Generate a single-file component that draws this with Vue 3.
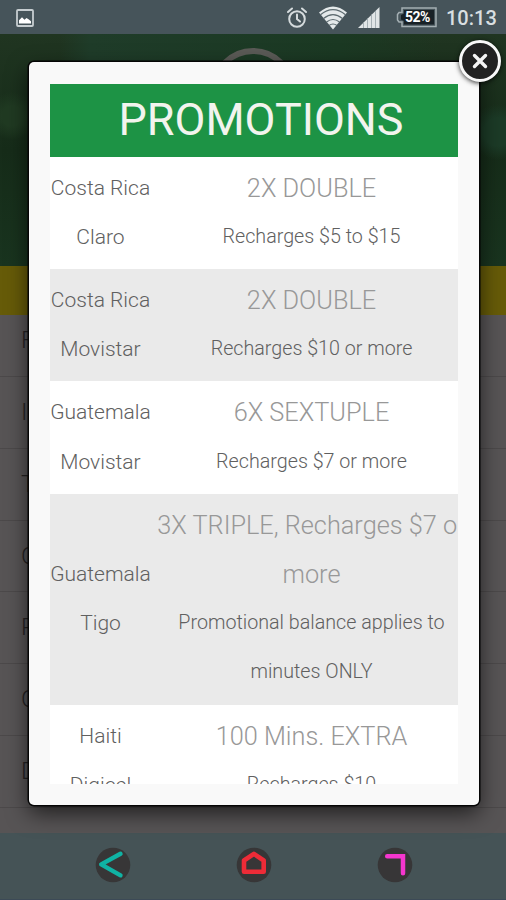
<template>
  <div class="phone">
    <header class="status-bar">
      <svg class="icon-picture" width="18" height="18" viewBox="0 0 18 18">
        <rect x="1" y="1" width="16" height="16" rx="1" fill="none" stroke="#c6cdd0" stroke-width="1.8" />
        <path d="M3 14.500v-3.200l3-3 2.500 2.500 2-1.800 2 1.300 2.500 2v2.200z" fill="#fff" />
      </svg>
      <div class="status-icons">
        <svg class="icon-alarm" width="20" height="22" viewBox="0 0 20 22" fill="none" stroke="#d5dbdd" stroke-width="2">
          <circle cx="10" cy="12" r="7.800" />
          <path d="M10 7.500V12l3 2.500M1 5l4-3.500M19 5l-4-3.500" stroke-linecap="round" />
        </svg>
        <svg class="icon-wifi" width="28" height="24" viewBox="0 0 28 24">
          <path d="M0 6.500Q14-5.500 28 6.500L14 23.500z" fill="#e4e9ea" />
          <path d="M1.500 8.800Q14-1.500 26.500 8.800M4.500 12.500Q14 4.800 23.500 12.500M7.500 16Q14 11 20.500 16M10 19.500Q14 16.500 18 19.500" fill="none" stroke="#5d6b70" stroke-width="1.200" />
        </svg>
        <svg class="icon-signal" width="22" height="21" viewBox="0 0 22 21">
          <path d="M0 21L21.500 0V21z" fill="#e0e5e6" />
          <path d="M5.500 15.500v6M9.500 11.500v10M13.500 7.500v14M17.500 4v17" stroke="#a5b0b4" stroke-width="1" />
        </svg>
        <div class="battery">
          <svg width="41" height="21" viewBox="0 0 41 21">
            <path d="M6 1H40V19.500H6V15H3L1.500 13V7.500L3 5.500H6z" fill="none" stroke="#a4afb3" stroke-width="1.500" />
            <path d="M8 3H38V17.500H8V14L5 12.500V8L8 6.500z" fill="#182126" />
          </svg>
          <span>52%</span>
        </div>
        <span class="clock">10:13</span>
      </div>
    </header>

    <main class="page">
      <div class="hero">
        <div class="hero-logo"></div>
      </div>
      <div class="yellow-strip"></div>
      <ul class="country-list">
        <li v-for="(letter, i) in letters" :key="i">{{ letter }}</li>
      </ul>
    </main>

    <nav class="nav-bar">
      <svg width="36" height="36" viewBox="0 0 36 36">
        <circle cx="18" cy="18" r="17.300" fill="#373637" />
        <path d="M25.500 6.800L6.200 17.400L25.500 28.300" fill="none" stroke="#10b3a4" stroke-width="4.400" stroke-linecap="round" stroke-linejoin="round" />
      </svg>
      <svg width="36" height="36" viewBox="0 0 36 36">
        <circle cx="18" cy="18" r="17.300" fill="#373637" />
        <path d="M8 24.700V13.500L17.900 6.800L27.700 13.500V24.700z" fill="none" stroke="#ee2b37" stroke-width="4.600" stroke-linejoin="round" />
      </svg>
      <svg width="36" height="36" viewBox="0 0 36 36">
        <circle cx="18" cy="18" r="17.300" fill="#373637" />
        <path d="M10.200 9.200H26V26.300" fill="none" stroke="#f536cf" stroke-width="4.500" stroke-linecap="round" />
      </svg>
    </nav>

    <section class="modal">
      <div class="modal-scroll">
        <table class="promotions">
          <colgroup>
            <col class="col-carrier" />
            <col />
          </colgroup>
          <thead>
            <tr>
              <th colspan="2">PROMOTIONS</th>
            </tr>
          </thead>
          <tbody>
            <tr v-for="(promo, i) in promotions" :key="i">
              <td class="carrier">{{ promo.country }}<br />{{ promo.carrier }}</td>
              <td class="offer">
                <p class="offer-title">{{ promo.title }}</p>
                <p class="offer-detail">{{ promo.detail }}</p>
              </td>
            </tr>
          </tbody>
        </table>
      </div>
      <button class="close" aria-label="Close">
        <svg width="16" height="16" viewBox="0 0 16 16">
          <path d="M2.500 2.500L13.500 13.500M13.500 2.500L2.500 13.500" stroke="#f5f5f5" stroke-width="3.400" stroke-linecap="round" />
        </svg>
      </button>
    </section>
  </div>
</template>

<script setup>
import { ref } from 'vue'

const letters = ref(['F', 'I', 'T', 'C', 'P', 'C', 'D'])

const promotions = ref([
  { country: 'Costa Rica', carrier: 'Claro', title: '2X DOUBLE', detail: 'Recharges $5 to $15' },
  { country: 'Costa Rica', carrier: 'Movistar', title: '2X DOUBLE', detail: 'Recharges $10 or more' },
  { country: 'Guatemala', carrier: 'Movistar', title: '6X SEXTUPLE', detail: 'Recharges $7 or more' },
  {
    country: 'Guatemala',
    carrier: 'Tigo',
    title: '3X TRIPLE, Recharges $7 or more',
    detail: 'Promotional balance applies to minutes ONLY'
  },
  { country: 'Haiti', carrier: 'Digicel', title: '100 Mins. EXTRA', detail: 'Recharges $10' }
])
</script>

<style>
body {
  margin: 0;
  background: #575455;
}
</style>

<style scoped>
.phone {
  position: relative;
  display: flex;
  flex-direction: column;
  width: 506px;
  height: 900px;
  overflow: hidden;
  font-family: Roboto, sans-serif;
}

/* STATUS BAR */
.status-bar {
  display: flex;
  justify-content: space-between;
  align-items: center;
  box-sizing: border-box;
  height: 34px;
  flex: none;
  padding: 1px 9px 0 16px;
  background: #46545a;
}
.status-icons {
  display: flex;
  align-items: center;
}
.icon-wifi {
  margin-left: 12px;
}
.icon-signal {
  margin-left: 11px;
}
.battery {
  position: relative;
  width: 41px;
  height: 21px;
  margin-left: 16px;
}
.battery span {
  position: absolute;
  left: 9px;
  top: 2px;
  font-size: 14px;
  line-height: 17px;
  font-weight: 700;
  letter-spacing: -0.5px;
  color: #fff;
}
.clock {
  width: 51px;
  margin-left: 9px;
  font-size: 20px;
  font-weight: 500;
  color: #d9dfe1;
}

/* PAGE BEHIND */
.page {
  flex: 1;
  min-height: 0;
  overflow: hidden;
}
.hero {
  height: 232px;
  overflow: hidden;
  background:
    radial-gradient(circle at 12px 82px, #203a22 0 10px, transparent 24px),
    radial-gradient(circle at 498px 98px, #1c3b27 0 14px, transparent 28px),
    linear-gradient(90deg, transparent 60px, #1f3c29 90px, #1b3923 340px, transparent 440px),
    linear-gradient(#203521, #162c19 50%, #19341f);
}
.hero-logo {
  box-sizing: border-box;
  width: 84px;
  height: 84px;
  margin: 14px auto 0;
  border: 6px solid #5b5b57;
  border-radius: 50%;
}
.yellow-strip {
  height: 49px;
  background: #665b08;
}
.country-list {
  margin: 0;
  padding: 0;
  list-style: none;
  height: 520px;
  background: #575455;
}
.country-list li {
  box-sizing: border-box;
  height: 71.800px;
  padding-left: 21px;
  border-bottom: 1px solid #4c494a;
  font-size: 24px;
  font-weight: 300;
  line-height: 71px;
  color: #242223;
}
.country-list li:first-child {
  height: 62px;
  line-height: 51px;
}

/* NAV BAR */
.nav-bar {
  display: flex;
  align-items: center;
  justify-content: center;
  gap: 105px;
  height: 67px;
  flex: none;
  padding: 0 0 4px 2px;
  box-sizing: border-box;
  background: #455356;
  box-shadow: inset 0 -1px #3c4a56;
}

/* MODAL */
.modal {
  position: absolute;
  left: 29px;
  top: 62px;
  box-sizing: border-box;
  width: 450px;
  height: 743px;
  padding: 21px;
  border-radius: 5px;
  background: #f9f9f9;
  box-shadow: 0 0 0 1.500px #050505, 0 8px 22px rgba(0, 0, 0, 0.65);
}
.modal-scroll {
  width: 408px;
  height: 700px;
  margin-top: 1px;
  overflow: hidden;
}
.promotions {
  width: 422px;
  table-layout: fixed;
  border-collapse: collapse;
  text-align: center;
}
.col-carrier {
  width: 101px;
}
.promotions th {
  height: 72.600px;
  padding: 0;
  background: #1d9345;
  color: #f2f4ee;
  font-size: 44.900px;
  font-weight: 400;
  line-height: 72.600px;
}
.promotions td {
  padding: 7px 0;
  background: #fff;
  line-height: 49.200px;
  font-weight: 300;
}
.promotions tbody tr:nth-child(even) td {
  background: #eaeaea;
}
.promotions .carrier {
  font-size: 21px;
  color: #606060;
}
.offer p {
  margin: 0;
}
.offer-title {
  font-size: 25.300px;
  color: #989898;
}
.offer .offer-detail {
  margin-top: -1px;
  padding-bottom: 1px;
  font-size: 19.700px;
  color: #606060;
}

/* CLOSE BUTTON */
.close {
  position: absolute;
  top: -22px;
  right: -22px;
  display: flex;
  align-items: center;
  justify-content: center;
  box-sizing: border-box;
  width: 42px;
  height: 42px;
  padding: 0;
  border: 3.500px solid #f8f8f8;
  border-radius: 50%;
  background: #222;
  box-shadow: 0 1px 5px rgba(0, 0, 0, 0.8);
}
</style>
